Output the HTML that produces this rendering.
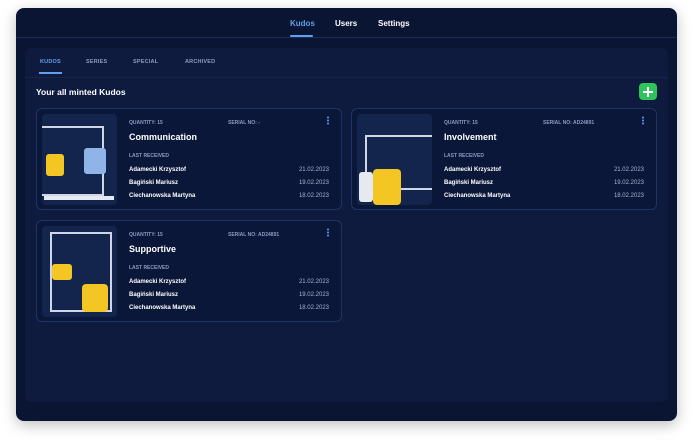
<!DOCTYPE html>
<html><head><style>
*{margin:0;padding:0;box-sizing:border-box}
body{width:693px;height:446px;background:#fff;font-family:"Liberation Sans",sans-serif;position:relative;overflow:hidden}
.app{position:absolute;left:16px;top:8px;width:661px;height:413px;background:#0a1433;border-radius:8px;box-shadow:0 4px 14px rgba(0,0,0,.25)}
.hdr{position:absolute;left:0;top:0;width:100%;height:30px;border-bottom:1px solid #1b2a52}
.nav{position:absolute;top:11px;font-size:8px;font-weight:bold;color:#fff}
.panel{position:absolute;left:9px;top:40px;width:643px;height:354px;background:#0e1b3e;border-radius:6px}
.tabs{position:absolute;left:0;top:0;width:100%;height:30px;border-bottom:1px solid #14244a}
.tab{position:absolute;top:11px;font-size:5.5px;font-weight:bold;color:#8d9ac0;letter-spacing:.2px}
h2{position:absolute;left:11px;top:39px;font-size:8.5px;color:#fff}
.plus{position:absolute;left:614px;top:35px;width:18px;height:17px;background:#2fc35c;border-radius:4px}
.plus:before{content:"";position:absolute;left:4px;top:7.5px;width:10px;height:2px;background:#fff}
.plus:after{content:"";position:absolute;left:8px;top:3.5px;width:2px;height:10px;background:#fff}
.card{position:absolute;width:306px;height:102px;border:1px solid #1e3366;border-radius:6px;background:#0b1739}
.img{position:absolute;left:5px;top:5px;width:75px;height:91px;background:#13254d;border-radius:4px;overflow:hidden}
.t{position:absolute;font-size:5px;color:#8d9ac0;font-weight:bold}
.title{position:absolute;left:92px;top:23px;font-size:9px;color:#fff;font-weight:bold}
.row{position:absolute;left:92px;width:200px;font-size:6px;color:#fff;font-weight:bold}
.row span{position:absolute;right:0;color:#aab3cf;font-weight:normal}
.dots{position:absolute;left:290px;top:7px;width:2px;height:9px;background:radial-gradient(circle,#5b8ef0 1px,transparent 1.1px) 0 0/2px 3px}
</style></head><body>
<div class="app">
 <div class="hdr"></div>
 <div class="nav" style="left:274px;color:#5fa0f0">Kudos</div>
 <div style="position:absolute;left:274px;top:27px;width:23px;height:2px;background:#5fa0f0;border-radius:1px"></div>
 <div class="nav" style="left:319px">Users</div>
 <div class="nav" style="left:362px">Settings</div>
 <div class="panel">
  <div class="tabs"></div>
  <div class="tab" style="left:15px;color:#5fa0f0">KUDOS</div>
  <div style="position:absolute;left:14px;top:24px;width:23px;height:2px;background:#5fa0f0"></div>
  <div class="tab" style="left:61px">SERIES</div>
  <div class="tab" style="left:108px">SPECIAL</div>
  <div class="tab" style="left:160px">ARCHIVED</div>
  <h2>Your all minted Kudos</h2>
  <div class="plus"></div>
 </div>
</div>
<div class="card" style="left:36px;top:108px">
 <div class="img"><div style="position:absolute;left:0;top:12px;width:62px;height:70px;border:2px solid #cfd6e6;border-left:none"></div><div style="position:absolute;left:4px;top:40px;width:18px;height:22px;background:#f3c623;border-radius:3px"></div><div style="position:absolute;left:42px;top:34px;width:22px;height:26px;background:#8fb4e8;border-radius:3px"></div><div style="position:absolute;left:2px;top:82px;width:70px;height:4px;background:#e6e9f0"></div></div>
 <div class="t" style="left:92px;top:11px">QUANTITY: 15</div>
 <div class="t" style="left:191px;top:11px">SERIAL NO: -</div>
 <div class="dots"></div>
 <div class="title">Communication</div>
 <div class="t" style="left:92px;top:44px">LAST RECEIVED</div>
 <div class="row" style="top:58px">Adamecki Krzysztof<span>21.02.2023</span></div>
 <div class="row" style="top:71px">Bagiński Mariusz<span>19.02.2023</span></div>
 <div class="row" style="top:84px">Ciechanowska Martyna<span>18.02.2023</span></div>
</div>
<div class="card" style="left:351px;top:108px">
 <div class="img"><div style="position:absolute;left:8px;top:21px;width:70px;height:55px;border:2px solid #cfd6e6;border-right:none"></div><div style="position:absolute;left:2px;top:58px;width:14px;height:30px;background:#e6e9f0;border-radius:3px"></div><div style="position:absolute;left:16px;top:55px;width:28px;height:36px;background:#f3c623;border-radius:4px"></div></div>
 <div class="t" style="left:92px;top:11px">QUANTITY: 15</div>
 <div class="t" style="left:191px;top:11px">SERIAL NO: AD24891</div>
 <div class="dots"></div>
 <div class="title">Involvement</div>
 <div class="t" style="left:92px;top:44px">LAST RECEIVED</div>
 <div class="row" style="top:58px">Adamecki Krzysztof<span>21.02.2023</span></div>
 <div class="row" style="top:71px">Bagiński Mariusz<span>19.02.2023</span></div>
 <div class="row" style="top:84px">Ciechanowska Martyna<span>18.02.2023</span></div>
</div>
<div class="card" style="left:36px;top:220px">
 <div class="img"><div style="position:absolute;left:8px;top:6px;width:62px;height:80px;border:2px solid #cfd6e6"></div><div style="position:absolute;left:10px;top:38px;width:20px;height:16px;background:#f3c623;border-radius:3px"></div><div style="position:absolute;left:40px;top:58px;width:26px;height:28px;background:#f3c623;border-radius:4px"></div></div>
 <div class="t" style="left:92px;top:11px">QUANTITY: 15</div>
 <div class="t" style="left:191px;top:11px">SERIAL NO: AD24891</div>
 <div class="dots"></div>
 <div class="title">Supportive</div>
 <div class="t" style="left:92px;top:44px">LAST RECEIVED</div>
 <div class="row" style="top:58px">Adamecki Krzysztof<span>21.02.2023</span></div>
 <div class="row" style="top:71px">Bagiński Mariusz<span>19.02.2023</span></div>
 <div class="row" style="top:84px">Ciechanowska Martyna<span>18.02.2023</span></div>
</div>
</body></html>
